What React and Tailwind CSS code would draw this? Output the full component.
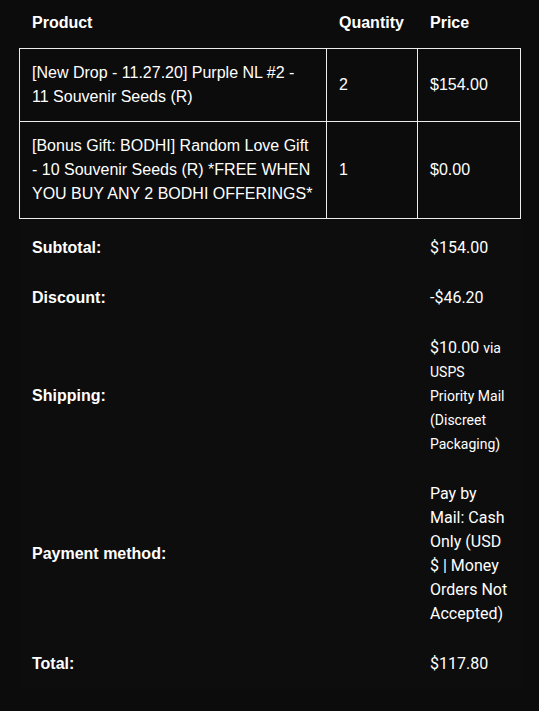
export default function App() {
  const arial = { fontFamily: '"Liberation Sans", Arial, sans-serif' };
  const roboto = { fontFamily: 'Roboto, "Liberation Sans", sans-serif' };
  const cols = "grid grid-cols-[307px_91px_103px]";
  const rows = [
    {
      name: "[New Drop - 11.27.20] Purple NL #2 - 11 Souvenir Seeds (R)",
      qty: "2",
      price: "$154.00",
    },
    {
      name: "[Bonus Gift: BODHI] Random Love Gift - 10 Souvenir Seeds (R) *FREE WHEN YOU BUY ANY 2 BODHI OFFERINGS*",
      qty: "1",
      price: "$0.00",
    },
  ];
  return (
    <div className="min-h-[711px] w-[539px] bg-[#0c0c0c] text-white text-[16px] leading-[24px]" style={arial}>
      <div className="w-[502px] ml-[19px]">
        <div className={`${cols} pl-[1px] font-bold`}>
          <div className="px-3 pt-[11px] pb-[13px]">Product</div>
          <div className="px-3 pt-[11px] pb-[13px]">Quantity</div>
          <div className="px-3 pt-[11px] pb-[13px]">Price</div>
        </div>
        <div className="border-l border-t border-[#ececec]">
          {rows.map((r, i) => (
            <div key={i} className={cols}>
              <div className="px-3 py-3 border-r border-b border-[#ececec]">{r.name}</div>
              <div className="px-3 py-3 border-r border-b border-[#ececec] flex items-center">{r.qty}</div>
              <div className="px-3 py-3 border-r border-b border-[#ececec] flex items-center">{r.price}</div>
            </div>
          ))}
        </div>
        <div className="pt-[4px] bg-[#0d0d0d]">
          {[
            { label: "Subtotal:", value: <span>$154.00</span> },
            { label: "Discount:", value: <span>-$46.20</span> },
            {
              label: "Shipping:",
              value: (
                <span>
                  $10.00 <span className="text-[14px]">via USPS Priority Mail (Discreet Packaging)</span>
                </span>
              ),
            },
            {
              label: "Payment method:",
              value: <span>Pay by Mail: Cash Only (USD $ | Money Orders Not Accepted)</span>,
            },
            { label: "Total:", value: <span>$117.80</span> },
          ].map((f, i) => (
            <div key={i} className="grid grid-cols-[398px_103px] pl-[1px]">
              <div className="px-3 py-[13px] font-bold flex items-center">{f.label}</div>
              <div className="px-3 py-[13px] flex items-center" style={roboto}>
                <div>{f.value}</div>
              </div>
            </div>
          ))}
        </div>
      </div>
    </div>
  );
}
